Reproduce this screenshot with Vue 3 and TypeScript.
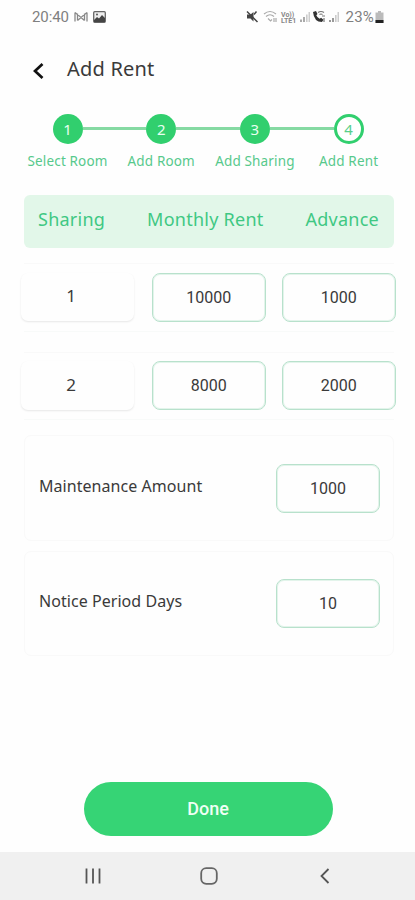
<script setup lang="ts">
import { ref } from 'vue'

interface Step { n: number; label: string; current?: boolean }
interface Rent { sharing: number; monthly: string; advance: string }
interface Extra { label: string; value: string; cls: string }

const steps: Step[] = [
  { n: 1, label: 'Select Room' },
  { n: 2, label: 'Add Room' },
  { n: 3, label: 'Add Sharing' },
  { n: 4, label: 'Add Rent', current: true },
]
const rents = ref<Rent[]>([
  { sharing: 1, monthly: '10000', advance: '1000' },
  { sharing: 2, monthly: '8000', advance: '2000' },
])
const extras = ref<Extra[]>([
  { label: 'Maintenance Amount', value: '1000', cls: 'maintenance' },
  { label: 'Notice Period Days', value: '10', cls: 'notice' },
])
</script>

<template>
  <div class="screen">
    <div class="status">
      <div class="status-left">
        <span class="time">20:40</span>
        <svg class="mail" width="14" height="12" viewBox="0 0 14 12" fill="none" stroke="#888" stroke-width="1.3">
          <path d="M1 1.5v9M3.5 2.5v7M1 1.5l6 5 6-5M13 1.5v9M10.500 2.500v7M3.500 9.500l3.500-3 3.500 3" />
        </svg>
        <svg width="13" height="12" viewBox="0 0 13 12">
          <rect x=".7" y=".7" width="11.600" height="10.600" rx="1" fill="#eee" stroke="#666" stroke-width="1.300" />
          <path d="M1 9l3-3 2 1.500L9 4l3 3v4H1z" fill="#444" />
          <circle cx="4" cy="3.500" r="1" fill="#555" />
        </svg>
      </div>
      <div class="status-right">
        <svg width="94" height="14" viewBox="0 0 94 14">
          <path d="M1 4.500h3.500L7.500 2v9.500L4.500 8.500H1z" fill="#444" />
          <path d="M1 1.500l10.500 10.500M8 4.500l2.500-3" stroke="#444" stroke-width="1.500" fill="none" />
          <g fill="none" stroke="#aaa" stroke-width="1.200">
            <path d="M18 4q6-5 12 0M20 6.500q4-3.500 8 0M22 8.500l2.500 2.500 1.500-1.500M28 8v4M30 8v4" />
          </g>
          <g class="tiny" fill="#888">
            <text x="35" y="6.500">Vo))</text>
            <text x="35" y="13">LTE1</text>
          </g>
          <path d="M54 12V9.500h2V12zM57 12V7h2v5z" fill="#aaa" />
          <path d="M60 12V4.500h1.600V12zM62.500 12V2h1.500v10z" fill="#ccc" />
          <path d="M67 2l3-1 1.500 3-1.200 1.300q1 2.500 3.300 3.500l1.500-1 2.400 2-1.500 2.200Q68 12 67 2z" fill="#333" />
          <path d="M72 2.500q3-2 6 0M73.500 4.500q1.500-1 3 0M78 8v4M76 6h3" fill="none" stroke="#777" stroke-width="1.200" />
          <path d="M83 12v-2h2v2zM86 12V8h2v4z" fill="#999" />
          <path d="M89 12V5h1.600v7zM91.500 12V2h1.500v10z" fill="#ccc" />
        </svg>
        <span class="percent">23%</span>
        <svg class="battery" width="9" height="12" viewBox="0 0 9 12">
          <path d="M3 0h3v1.500h2.500V12H.5V1.500H3z" fill="#bbb" />
          <path d="M.5 9h8v3h-8z" fill="#222" />
        </svg>
      </div>
    </div>

    <header class="header">
      <svg width="12" height="18" viewBox="0 0 12 18" fill="none" stroke="#111" stroke-width="2.700">
        <path d="M10.500 2L3 9l7.500 7" />
      </svg>
      <h1>Add Rent</h1>
    </header>

    <div class="stepper">
      <div v-for="s in steps" :key="s.n" class="step">
        <span class="dot" :class="{ current: s.current }">{{ s.n }}</span>
        <span class="label">{{ s.label }}</span>
      </div>
    </div>

    <div class="thead">
      <span>Sharing</span>
      <span>Monthly Rent</span>
      <span>Advance</span>
    </div>

    <div v-for="r in rents" :key="r.sharing" class="row">
      <div class="sharing">{{ r.sharing }}</div>
      <div class="field">{{ r.monthly }}</div>
      <div class="field">{{ r.advance }}</div>
    </div>

    <div v-for="e in extras" :key="e.label" class="extra" :class="e.cls">
      <span class="name">{{ e.label }}</span>
      <div class="field small">{{ e.value }}</div>
    </div>

    <button class="done" type="button">Done</button>

    <nav class="nav">
      <svg width="16" height="16" viewBox="0 0 16 16" stroke="#555" stroke-width="1.800">
        <path d="M1.500 .5v15M8 .5v15M14.500 .5v15" />
      </svg>
      <svg width="18" height="18" viewBox="0 0 18 18" fill="none" stroke="#666" stroke-width="1.800">
        <rect x="1.200" y="1.200" width="15.600" height="15.600" rx="5" />
      </svg>
      <svg width="10" height="16" viewBox="0 0 10 16" fill="none" stroke="#555" stroke-width="1.800">
        <path d="M8.500 1L1.500 8l7 7" />
      </svg>
    </nav>
  </div>
</template>

<style>
body { background: #fefefe; }
</style>

<style scoped>
* { box-sizing: border-box; }
.screen {
  width: 415px;
  height: 900px;
  display: flex;
  flex-direction: column;
  background: #fefefe;
  color: #3a3a3a;
  font-family: "Noto Sans", sans-serif;
  overflow: hidden;
}
.status {
  height: 34px;
  flex: none;
  display: flex;
  justify-content: space-between;
  padding: 0 31px 0 32px;
  font: 15px/34px Roboto, sans-serif;
  color: #808080;
}
.status-left, .status-right { display: flex; align-items: center; }
.status-left { gap: 5px; }
.time { letter-spacing: -.1px; }
.percent { margin-left: 6px; font-size: 15px; line-height: 34px; letter-spacing: .2px; }
.battery { margin-left: 1px; }
.tiny { font: 700 7px Roboto, sans-serif; }
.header {
  height: 70px;
  flex: none;
  display: flex;
  align-items: center;
  padding: 0 0 0 32px;
  gap: 23px;
}
.header svg { margin-top: 3px; }
h1 {
  margin: 0;
  font-size: 20px;
  font-weight: 400;
  line-height: 28px;
  letter-spacing: .2px;
}
.stepper {
  height: 91px;
  flex: none;
  display: grid;
  grid-template-columns: repeat(4, 93.700px);
  padding: 9.500px 0 0 20.700px;
}
.step {
  display: flex;
  flex-direction: column;
  align-items: center;
  position: relative;
}
.step + .step::before {
  content: "";
  position: absolute;
  right: calc(50% + 15px);
  top: 13.500px;
  width: 63.700px;
  height: 3px;
  background: #86daa3;
}
.dot {
  width: 30px;
  height: 30px;
  border-radius: 50%;
  background: #31cf6e;
  color: #e8fff0;
  font-size: 15px;
  line-height: 30px;
  text-align: center;
}
.dot.current {
  background: #fff;
  border: 3px solid #31cf6e;
  color: #59cf8b;
  line-height: 25px;
}
.label {
  margin-top: 7px;
  font-size: 13.500px;
  line-height: 20px;
  letter-spacing: .15px;
  color: #57c98c;
  white-space: nowrap;
}
.thead {
  width: 370px;
  height: 53px;
  flex: none;
  margin-left: 24px;
  padding: 0 15px 5px 14px;
  border-radius: 6px;
  background: #e2f7e9;
  color: #3fc883;
  font-size: 18px;
  letter-spacing: .25px;
  display: flex;
  align-items: center;
  justify-content: space-between;
}
.row {
  width: 370px;
  height: 69px;
  flex: none;
  margin: 15px 0 0 24px;
  border-top: 1px solid #f9f9f9;
  border-bottom: 1px solid #f8faf9;
  display: flex;
  padding-top: 9px;
}
.row + .row { margin-top: 20px; height: 68px; padding-top: 8px; }
.row + .row .sharing { height: 49px; line-height: 48px; }
.sharing {
  width: 113px;
  height: 48px;
  flex: none;
  margin: 0 18px 0 -3px;
  border-radius: 7px;
  box-shadow: 0 1px 2px #00000018;
  background: #fefefe;
  font-size: 17px;
  line-height: 46px;
  padding-right: 13px;
  text-align: center;
}
.field {
  width: 113.500px;
  height: 49px;
  flex: none;
  border: 1px solid #b8e1cc;
  box-shadow: inset 0 0 0 1px #e3f4eb;
  border-radius: 8px;
  background: #fefefe;
  font: 16px/48px Roboto, sans-serif;
  text-align: center;
}
.field + .field { margin-left: 16.500px; }
.extra {
  width: 370px;
  height: 106px;
  flex: none;
  margin: 15px 0 0 24px;
  padding: 0 13px 0 14px;
  border: 1px solid #f9f9f9;
  border-radius: 7px;
  display: flex;
  align-items: center;
  justify-content: space-between;
}
.extra.notice { margin-top: 10px; height: 105px; }
.name { font-size: 16px; margin-top: -5px; letter-spacing: .05px; }
.small { width: 104px; }
.done {
  width: 249px;
  height: 54px;
  flex: none;
  margin: 126px 0 0 83.500px;
  border: 0;
  border-radius: 27px;
  background: #36d475;
  color: #effff4;
  font: 500 18px/54px Roboto, sans-serif;
  padding: 0;
}
.nav {
  height: 48px;
  margin-top: auto;
  flex: none;
  background: #f0f0f0;
  display: grid;
  grid-template-columns: 16px 18px 14px;
  column-gap: 99px;
  align-items: center;
  padding-left: 85px;
}
.nav svg:last-child { margin-left: 3px; }
</style>
